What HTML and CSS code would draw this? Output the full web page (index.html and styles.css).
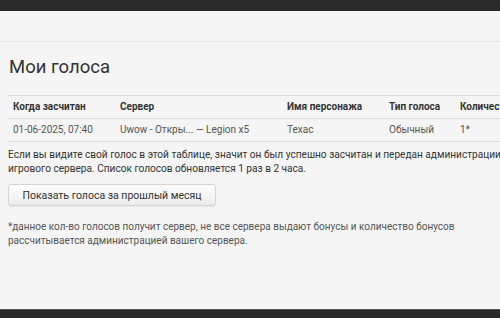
FILE: index.html
```html
<!DOCTYPE html>
<html>

<head>
  <meta charset="UTF-8">
  <title>Мои голоса</title>
  <link rel="stylesheet" href="styles.css">
</head>

<body>
  <div class="topbar"></div>
  <div class="strip"></div>

  <div class="content">
    <h1>Мои голоса</h1>

    <div class="table-wrap">
      <table class="votes">
        <colgroup>
          <col class="c-date">
          <col class="c-server">
          <col class="c-char">
          <col class="c-type">
          <col class="c-count">
        </colgroup>
        <thead>
          <tr>
            <th>Когда засчитан</th>
            <th>Сервер</th>
            <th>Имя персонажа</th>
            <th>Тип голоса</th>
            <th>Количество</th>
          </tr>
        </thead>
        <tbody>
          <tr>
            <td>01-06-2025, 07:40</td>
            <td>Uwow - Откры... — Legion x5</td>
            <td>Texac</td>
            <td>Обычный</td>
            <td>1*</td>
          </tr>
        </tbody>
      </table>
    </div>

    <p class="info">
      Если вы видите свой голос в этой таблице, значит он был успешно засчитан и передан администрации<br>
      игрового сервера. Список голосов обновляется 1 раз в 2 часа.
    </p>

    <button class="btn">Показать голоса за прошлый месяц</button>

    <p class="note">
      *данное кол-во голосов получит сервер, не все сервера выдают бонусы и количество бонусов<br>
      рассчитывается администрацией вашего сервера.
    </p>
  </div>

  <div class="bottombar"></div>
</body>

</html>
```

FILE: styles.css
```css
html,
body {
  margin: 0;
  height: 100%;
}

body {
  font-family: Roboto, "Liberation Sans", sans-serif;
  background-color: #f5f5f5;
  color: #333;
  font-size: 10px;
  line-height: 14px;
  display: flex;
  flex-direction: column;
  overflow: hidden;
}

.topbar {
  height: 11px;
  background-color: #2a2a2a;
}

.strip {
  height: 30px;
  border-bottom: 1px solid #e6e6e6;
}

.content {
  flex: 1;
  padding: 0 8px;
  overflow: hidden;
}

h1 {
  font-size: 18.5px;
  font-weight: 400;
  line-height: 24px;
  margin: 13px 0 0 1px;
  color: #333;
}

.table-wrap {
  margin-top: 16px;
  width: 600px;
}

.votes {
  border-collapse: collapse;
  table-layout: fixed;
  width: 560px;
}

.c-date { width: 107px; }
.c-server { width: 167px; }
.c-char { width: 102px; }
.c-type { width: 71px; }
.c-count { width: 113px; }

.votes th,
.votes td {
  text-align: left;
  padding: 4px 5px;
  border-top: 1px solid #ddd;
  white-space: nowrap;
}

.votes th {
  font-weight: 700;
  color: #333;
}

.votes td {
  color: #555;
  border-bottom: 1px solid #ddd;
}

.info {
  margin: 6px 0 0 0;
  white-space: nowrap;
  font-size: 10.1px;
}

.btn {
  display: block;
  margin-top: 8px;
  font-family: inherit;
  font-size: 10.5px;
  color: #333;
  height: 22px;
  width: 208px;
  padding: 0 6px;
  white-space: nowrap;
  border: 1px solid #d4d4d4;
  border-radius: 3px;
  background: linear-gradient(#fff, #ececec);
  box-shadow: 0 1px 1px rgba(0, 0, 0, 0.06);
}

.note {
  margin: 14px 0 0 0;
  color: #555;
  white-space: nowrap;
}

.bottombar {
  height: 8px;
  border-top: 1px solid #555;
  background-color: #2a2a2a;
}
```
